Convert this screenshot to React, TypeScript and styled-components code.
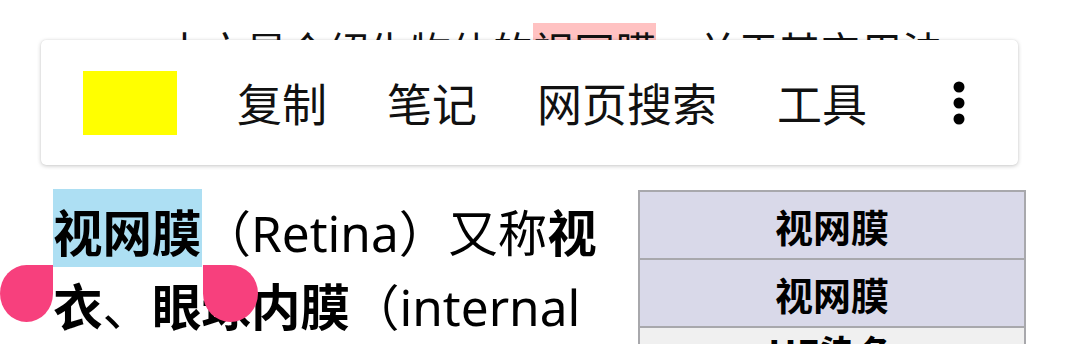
import styled, { createGlobalStyle } from "styled-components";

const GlobalStyle = createGlobalStyle`
  html, body {
    margin: 0;
    padding: 0;
    background: #ffffff;
  }
  body {
    font-family: "Noto Sans", "Noto Sans CJK SC", sans-serif;
    color: #000000;
  }
`;

export default function App() {
  return (
    <>
      <GlobalStyle />
      <Page>
        <Hatnote>
          本文是介绍生物体的<Found>视网膜</Found>，关于其它用法
        </Hatnote>

        <Article>
          <Lead>
            <Selected>
              <b>视网膜</b>
            </Selected>
            （Retina）又称<b>视衣</b>、<b>眼球内膜</b>（internal limiting membrane）
          </Lead>

          <Infobox>
            <InfoRow $kind="header">视网膜</InfoRow>
            <InfoRow $kind="header">视网膜</InfoRow>
            <InfoRow $kind="plain">HE染色</InfoRow>
          </Infobox>
        </Article>

        <Toolbar>
          <Swatch />
          <MenuItem>复制</MenuItem>
          <MenuItem>笔记</MenuItem>
          <MenuItem>网页搜索</MenuItem>
          <MenuItem>工具</MenuItem>
          <MoreButton aria-label="更多">
            <svg width="14" height="46" viewBox="0 0 14 46">
              <circle cx="7" cy="7" r="5.5" fill="#000" />
              <circle cx="7" cy="23" r="5.5" fill="#000" />
              <circle cx="7" cy="39" r="5.5" fill="#000" />
            </svg>
          </MoreButton>
        </Toolbar>

        <Handle $side="start" />
        <Handle $side="end" />
      </Page>
    </>
  );
}

const Page = styled.div`
  position: relative;
  width: 1080px;
  height: 344px;
  overflow: hidden;
  background: #ffffff;
  padding-top: 24px;
  box-sizing: border-box;
`;

const Hatnote = styled.div`
  padding-left: 164px;
  font-size: 41px;
  line-height: 55px;
  white-space: nowrap;
  color: #111;
  margin-bottom: 110px;
`;

const Found = styled.span`
  background: #ffc2c2;
`;

const Article = styled.div`
  display: flex;
  align-items: flex-start;
  padding-left: 53px;
  gap: 25px;
`;

const Lead = styled.p`
  width: 560px;
  margin: 0;
  padding-top: 7px;
  font-size: 49.5px;
  line-height: 74px;
  color: #000;

  b {
    font-weight: 700;
  }
`;

const Selected = styled.span`
  background: #addff3;
  padding-top: 10px;
`;

const Infobox = styled.div`
  width: 388px;
  box-sizing: border-box;
  border: 2px solid #a8a8ac;
  border-bottom: none;
  margin-top: 1px;
  display: flex;
  flex-direction: column;
`;

const InfoRow = styled.div<{ $kind: "header" | "plain" }>`
  height: 68px;
  display: flex;
  align-items: ${(p) => (p.$kind === "header" ? "center" : "flex-start")};
  justify-content: center;
  box-sizing: border-box;
  padding-top: ${(p) => (p.$kind === "header" ? "0" : "5px")};
  line-height: ${(p) => (p.$kind === "header" ? "normal" : "1")};
  border-bottom: 2px solid #a8a8ac;
  background: ${(p) => (p.$kind === "header" ? "#d9d9e9" : "#f0f0f0")};
  font-family: "Noto Sans CJK SC", sans-serif;
  font-size: 38px;
  font-weight: 700;
  color: #000;
`;

const Toolbar = styled.div`
  position: absolute;
  left: 41px;
  top: 40px;
  width: 977px;
  height: 125px;
  box-sizing: border-box;
  display: flex;
  align-items: center;
  gap: 60px;
  padding-left: 42px;
  background: #ffffff;
  border-radius: 5px;
  box-shadow: 0 1px 4px rgba(0, 0, 0, 0.22), 0 0 1px rgba(0, 0, 0, 0.12);
`;

const Swatch = styled.div`
  width: 94px;
  height: 64px;
  background: #ffff00;
  margin-top: 1px;
`;

const MenuItem = styled.span`
  font-family: "Noto Sans CJK SC", sans-serif;
  font-size: 45px;
  line-height: 1;
  color: #111;
  white-space: nowrap;
`;

const MoreButton = styled.div`
  display: flex;
  align-items: center;
  justify-content: center;
  margin-left: 25px;
`;

const Handle = styled.div<{ $side: "start" | "end" }>`
  position: absolute;
  top: 265px;
  left: ${(p) => (p.$side === "start" ? "0px" : "203px")};
  width: ${(p) => (p.$side === "start" ? "53px" : "55px")};
  height: 57px;
  background: #f7407d;
  border-radius: ${(p) => (p.$side === "start" ? "50% 0 50% 50%" : "0 50% 50% 50%")};
`;
